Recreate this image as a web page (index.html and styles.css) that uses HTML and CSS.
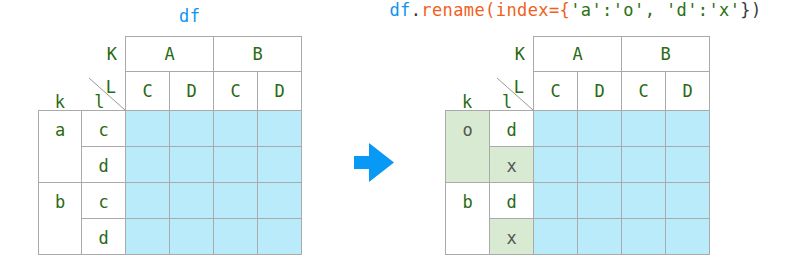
FILE: index.html
```html
<!DOCTYPE html>
<html>
<head>
<meta charset="utf-8">
<link rel="stylesheet" href="styles.css">
</head>
<body>
<div class="stage">
  <div class="fig fig-left">
    <div class="title title-left"><span class="c-blue">df</span></div>
    <div class="frame">
      <div class="hname">K</div>
      <div class="cell">A</div>
      <div class="cell end">B</div>
      <div class="corner">
        <svg class="diag" width="87" height="39" viewBox="0 0 87 39"><line x1="51" y1="7" x2="87.5" y2="39.5" stroke="#9a9a9a" stroke-width="1"/></svg>
        <span class="cn-L">L</span>
        <span class="cn-k">k</span>
        <span class="cn-l">l</span>
      </div>
      <div class="cell">C</div>
      <div class="cell">D</div>
      <div class="cell">C</div>
      <div class="cell end">D</div>

      <div class="cell idx span2">a</div>
      <div class="cell idx">c</div>
      <div class="cell data"></div><div class="cell data"></div><div class="cell data"></div><div class="cell data end"></div>
      <div class="cell idx">d</div>
      <div class="cell data"></div><div class="cell data"></div><div class="cell data"></div><div class="cell data end"></div>
      <div class="cell idx span2 last">b</div>
      <div class="cell idx">c</div>
      <div class="cell data"></div><div class="cell data"></div><div class="cell data"></div><div class="cell data end"></div>
      <div class="cell idx last">d</div>
      <div class="cell data last"></div><div class="cell data last"></div><div class="cell data last"></div><div class="cell data end last"></div>
    </div>
  </div>

  <svg class="arrow" width="40" height="40" viewBox="0 0 40 40"><polygon points="0,13 15,13 15,0 40,19.5 15,39 15,26 0,26" fill="#0899f7"/></svg>

  <div class="fig fig-right">
    <div class="title title-right"><span class="code"><span class="c-blue">df</span><span class="c-dark">.</span><span class="c-orange">rename(index={</span><span class="c-green">'a':'o', 'd':'x'</span><span class="c-dark">})</span></span></div>
    <div class="frame frame-wide">
      <div class="hname">K</div>
      <div class="cell">A</div>
      <div class="cell end">B</div>
      <div class="corner">
        <svg class="diag" width="88" height="39" viewBox="0 0 88 39"><line x1="52" y1="7" x2="88.5" y2="39.5" stroke="#9a9a9a" stroke-width="1"/></svg>
        <span class="cn-L">L</span>
        <span class="cn-k">k</span>
        <span class="cn-l">l</span>
      </div>
      <div class="cell">C</div>
      <div class="cell">D</div>
      <div class="cell">C</div>
      <div class="cell end">D</div>

      <div class="cell idx span2 hl muted">o</div>
      <div class="cell idx">d</div>
      <div class="cell data"></div><div class="cell data"></div><div class="cell data"></div><div class="cell data end"></div>
      <div class="cell idx hl muted">x</div>
      <div class="cell data"></div><div class="cell data"></div><div class="cell data"></div><div class="cell data end"></div>
      <div class="cell idx span2 last">b</div>
      <div class="cell idx">d</div>
      <div class="cell data"></div><div class="cell data"></div><div class="cell data"></div><div class="cell data end"></div>
      <div class="cell idx last hl muted">x</div>
      <div class="cell data last"></div><div class="cell data last"></div><div class="cell data last"></div><div class="cell data end last"></div>
    </div>
  </div>
</div>
</body>
</html>
```
FILE: styles.css
```css
html, body {
  margin: 0;
  padding: 0;
  background: #ffffff;
}
body {
  width: 800px;
  height: 256px;
  overflow: hidden;
  font-family: "DejaVu Sans Mono", "Liberation Mono", monospace;
}
.stage {
  display: flex;
  align-items: flex-start;
  padding-left: 38px;
}
.fig {
  display: flex;
  flex-direction: column;
}
.fig-left { width: 264px; }
.fig-right { width: 265px; margin-left: 51px; }
.arrow {
  display: block;
  margin-left: 52px;
  margin-top: 143px;
}
.title {
  height: 36px;
  box-sizing: border-box;
  font-size: 17px;
  line-height: 16px;
  letter-spacing: 0.4px;
  white-space: nowrap;
  display: flex;
}
.title-left {
  padding-top: 8px;
  padding-left: 141px;
}
.title-right {
  padding-top: 2px;
  justify-content: center;
}
.code { margin-right: 4px; }
.c-blue { color: #0f93f0; }
.c-dark { color: #3a3a3a; }
.c-orange { color: #f0601c; }
.c-green { color: #2a7012; }

.frame {
  display: grid;
  grid-template-columns: 43px 44px 44px 44px 44px 45px;
  grid-template-rows: 35px 39px 36px 36px 36px 37px;
  font-size: 17px;
  color: #2a6a12;
}
.frame-wide {
  grid-template-columns: 44px 44px 44px 44px 44px 45px;
}
.hname {
  grid-column: span 2;
  display: flex;
  align-items: center;
  justify-content: flex-end;
  padding-right: 8px;
}
.cell {
  box-sizing: border-box;
  border-left: 1px solid #aaaaaa;
  border-top: 1px solid #aaaaaa;
  display: flex;
  align-items: center;
  justify-content: center;
  grid-column: span 1;
}
.frame > .cell:nth-child(2),
.frame > .cell:nth-child(3) {
  grid-column: span 2;
}
.end { border-right: 1px solid #aaaaaa; }
.last { border-bottom: 1px solid #aaaaaa; }
.data { background: #b9ebfb; }
.hl { background: #d9ead3; }
.muted { color: #555555; }
.idx {
  align-items: flex-start;
  padding-top: 2px;
  line-height: 35px;
}
.span2 { grid-row: span 2; }

.corner {
  grid-column: span 2;
  position: relative;
  display: grid;
  grid-template-columns: 1fr 1fr;
  grid-template-rows: 1fr auto;
}
.diag {
  position: absolute;
  left: 0;
  top: 0;
  overflow: visible;
}
.cn-L {
  grid-column: 2;
  grid-row: 1;
  justify-self: end;
  align-self: end;
  padding-right: 9px;
  line-height: 16px;
  margin-bottom: -1px;
}
.cn-k {
  grid-column: 1;
  grid-row: 2;
  justify-self: center;
  line-height: 16px;
}
.cn-l {
  grid-column: 2;
  grid-row: 2;
  justify-self: center;
  line-height: 16px;
  margin-right: 8px;
}
```
